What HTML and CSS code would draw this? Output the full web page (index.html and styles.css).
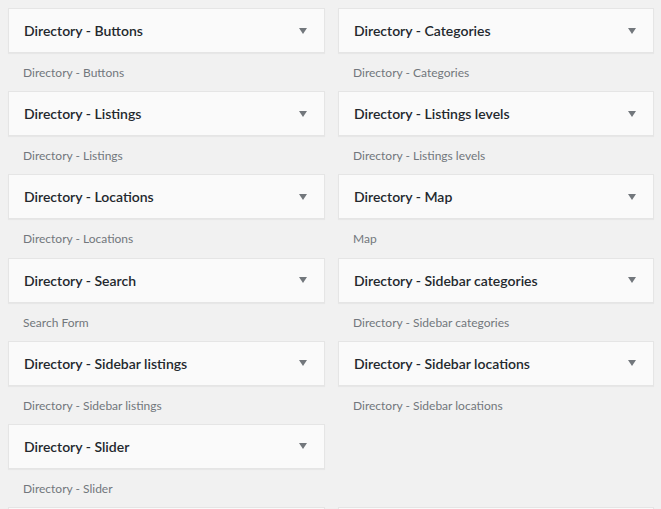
FILE: index.html
```html
<!DOCTYPE html>
<html lang="en">
<head>
    <meta charset="UTF-8">
    <meta name="viewport" content="width=device-width, initial-scale=1.0">
    <title>Widgets</title>
    <link rel="stylesheet" href="styles.css">
</head>
<body>
    <div class="widget-list">
        <div class="widget">
            <div class="widget-top"><h3>Directory - Buttons</h3><span class="arrow"></span></div>
            <p class="widget-description">Directory - Buttons</p>
        </div>
        <div class="widget">
            <div class="widget-top"><h3>Directory - Categories</h3><span class="arrow"></span></div>
            <p class="widget-description">Directory - Categories</p>
        </div>
        <div class="widget">
            <div class="widget-top"><h3>Directory - Listings</h3><span class="arrow"></span></div>
            <p class="widget-description">Directory - Listings</p>
        </div>
        <div class="widget">
            <div class="widget-top"><h3>Directory - Listings levels</h3><span class="arrow"></span></div>
            <p class="widget-description">Directory - Listings levels</p>
        </div>
        <div class="widget">
            <div class="widget-top"><h3>Directory - Locations</h3><span class="arrow"></span></div>
            <p class="widget-description">Directory - Locations</p>
        </div>
        <div class="widget">
            <div class="widget-top"><h3>Directory - Map</h3><span class="arrow"></span></div>
            <p class="widget-description">Map</p>
        </div>
        <div class="widget">
            <div class="widget-top"><h3>Directory - Search</h3><span class="arrow"></span></div>
            <p class="widget-description">Search Form</p>
        </div>
        <div class="widget">
            <div class="widget-top"><h3>Directory - Sidebar categories</h3><span class="arrow"></span></div>
            <p class="widget-description">Directory - Sidebar categories</p>
        </div>
        <div class="widget">
            <div class="widget-top"><h3>Directory - Sidebar listings</h3><span class="arrow"></span></div>
            <p class="widget-description">Directory - Sidebar listings</p>
        </div>
        <div class="widget">
            <div class="widget-top"><h3>Directory - Sidebar locations</h3><span class="arrow"></span></div>
            <p class="widget-description">Directory - Sidebar locations</p>
        </div>
        <div class="widget">
            <div class="widget-top"><h3>Directory - Slider</h3><span class="arrow"></span></div>
            <p class="widget-description">Directory - Slider</p>
        </div>
        <div class="widget"></div>
        <!-- next row, only the top edge shows in the window -->
        <div class="widget">
            <div class="widget-top"></div>
        </div>
        <div class="widget">
            <div class="widget-top"></div>
        </div>
    </div>
</body>
</html>
```

FILE: styles.css
```css
html, body {
    height: 100%;
    overflow: hidden;
}
body {
    margin: 0;
    padding: 8px 7px 0 8px;
    background-color: #f1f1f1;
    font-family: Lato, "Noto Sans", sans-serif;
}
.widget-list {
    display: grid;
    grid-template-columns: 317px 316px;
    column-gap: 13px;
}
.widget {
    height: 83.2px;
}
.widget-top {
    display: flex;
    align-items: center;
    justify-content: space-between;
    height: 43px;
    background: #fafafa;
    border: 1px solid #e5e5e5;
    box-shadow: 0 1px 1px rgba(0, 0, 0, 0.04);
}
.widget-top h3 {
    margin: 0;
    padding: 0 15px;
    font-size: 14px;
    font-weight: 600;
    color: #23282d;
}
.arrow {
    width: 0;
    height: 0;
    margin-right: 17px;
    border-left: 4.5px solid transparent;
    border-right: 4.5px solid transparent;
    border-top: 6px solid #72777c;
}
.widget-description {
    margin: 0;
    padding: 11px 15px 0;
    font-size: 12px;
    line-height: 17px;
    color: #72777c;
}
```
